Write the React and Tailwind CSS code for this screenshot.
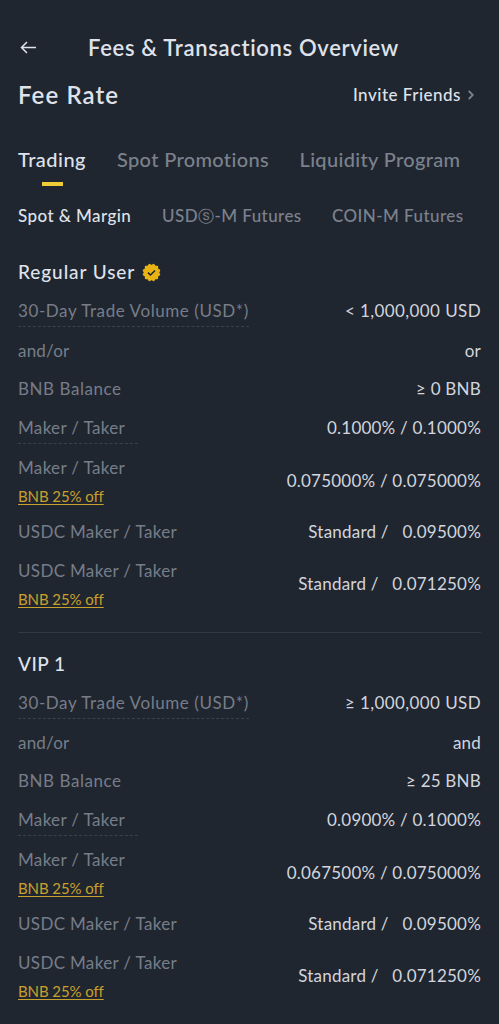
import clsx from "clsx";

const tabs = [
  { label: "Trading", className: "w-[68px] tracking-[0.5px]", active: true },
  { label: "Spot Promotions", className: "w-[152px] tracking-[0.35px]" },
  { label: "Liquidity Program", className: "w-[160px] tracking-[0.35px]" },
];

const vipLevels = [
  { name: "Regular User", verified: true, volume: "< 1,000,000 USD", joiner: "or", balance: "≥ 0 BNB", fee: "0.1000% / 0.1000%", discounted: "0.075000% / 0.075000%" },
  { name: "VIP 1", verified: false, volume: "≥ 1,000,000 USD", joiner: "and", balance: "≥ 25 BNB", fee: "0.0900% / 0.1000%", discounted: "0.067500% / 0.075000%" },
];

function BackIcon() {
  return (
    <svg className="h-4 w-4" fill="none" stroke="currentColor" strokeWidth="1.5" viewBox="0 0 16 16">
      <path d="M16 7.5H1.8M7 2L1.5 7.5L7 13" />
    </svg>
  );
}

function VerifiedBadge() {
  return (
    <svg className="h-[19px] w-[19px]" viewBox="0 0 20 20">
      <g fill="#e9b413">
        <rect height="14" rx="1" width="14" x="3" y="3" />
        <rect height="14" rx="1" transform="rotate(30 10 10)" width="14" x="3" y="3" />
        <rect height="14" rx="1" transform="rotate(60 10 10)" width="14" x="3" y="3" />
      </g>
      <path d="M6.3 10.1L8.9 12.6L13.7 7.9" fill="none" stroke="#202630" strokeWidth="1.7" />
    </svg>
  );
}

function Row({ label, value, className, labelClass = "tracking-[0.33px]", valueClass = "tracking-[0.22px]", discount }) {
  return (
    <div className={clsx("flex items-start justify-between", className)}>
      <div className="flex flex-col items-start text-[#777d88]">
        <span className={clsx("whitespace-nowrap", labelClass)}>{label}</span>
        {discount ? (
          <a className="mt-1 text-[15px] leading-6 tracking-[-0.1px] text-[#c8a02c] underline underline-offset-2">BNB 25% off</a>
        ) : null}
      </div>
      <span className={clsx("whitespace-pre text-[#d2d5dd]", valueClass, discount && "mt-[13px]")}>{value}</span>
    </div>
  );
}

function LevelSection({ level }) {
  return (
    <section className="h-[392px] border-b border-[#323943] pt-[19px] text-[17px] leading-6">
      <div className="mb-[15px] flex h-6 items-center gap-[7px]">
        <h2 className={clsx("text-[19px] font-medium text-[#dfe2ea]", level.verified ? "tracking-[0.92px]" : "tracking-[0.5px]")}>{level.name}</h2>
        {level.verified ? <VerifiedBadge /> : null}
      </div>
      <Row
        className="h-10"
        label="30-Day Trade Volume (USD*)"
        labelClass="h-7 w-[231px] border-b border-dashed border-[#3a414c] tracking-[0.58px]"
        value={level.volume}
        valueClass="tracking-[0.4px]"
      />
      <Row className="h-[38px]" label="and/or" labelClass="tracking-[0.2px]" value={level.joiner} />
      <Row className="h-[39px]" label="BNB Balance" labelClass="tracking-[0.55px]" value={level.balance} />
      <Row
        className="h-10"
        label="Maker / Taker"
        labelClass="h-7 w-[120px] border-b border-dashed border-[#3a414c] tracking-[0.33px]"
        value={level.fee}
      />
      <Row className="h-16" discount label="Maker / Taker" value={level.discounted} />
      <Row className="h-[39px]" label="USDC Maker / Taker" value={"Standard /   0.09500%"} />
      <Row className="h-[72px]" discount label="USDC Maker / Taker" value={"Standard /   0.071250%"} />
    </section>
  );
}

export default function App() {
  return (
    <main className="h-[1024px] w-[499px] overflow-hidden bg-[#202630] pl-[18px] pr-[18px] font-['Lato',sans-serif] text-[#dfe2ea]">
      <header className="flex h-[71px] items-center pt-6">
        <div className="w-[70px] pl-0.5">
          <BackIcon />
        </div>
        <h1 className="whitespace-nowrap text-[22px] font-semibold leading-8 tracking-[0.68px]">Fees &amp; Transactions Overview</h1>
      </header>

      <div className="flex h-12 items-center justify-between">
        <h2 className="text-[24px] font-semibold tracking-[1.1px]">Fee Rate</h2>
        <a className="mr-[7px] flex items-center gap-[7px] text-[17px] font-medium tracking-[0.5px]">
          Invite Friends
          <svg className="h-2.5 w-[6px]" fill="none" stroke="#7c828d" strokeWidth="1.8" viewBox="0 0 6 10">
            <path d="M0.8 1L4.8 5L0.8 9" />
          </svg>
        </a>
      </div>

      <nav className="mt-6 flex h-[43px] gap-[31px] text-[20px] font-medium leading-8">
        {tabs.map((tab) => (
          <div className={clsx("flex flex-col items-center whitespace-nowrap", tab.className, !tab.active && "text-[#7c828d]")} key={tab.label}>
            <span>{tab.label}</span>
            {tab.active ? <div className="mt-[7px] h-1 w-[21px] bg-[#efcb38]" /> : null}
          </div>
        ))}
      </nav>

      <nav className="mt-[18px] flex h-6 gap-[31px] whitespace-nowrap text-[17px] font-medium leading-6 tracking-[0.43px] text-[#7c828d]">
        <span className="w-[113px] text-[#dfe2ea]">Spot &amp; Margin</span>
        <span className="w-[139px]">
          USD<span className="font-['DejaVu_Sans'] text-[16px]">ⓢ</span>-M Futures
        </span>
        <span>COIN-M Futures</span>
      </nav>

      <div className="mt-[13px]">
        {vipLevels.map((level) => (
          <LevelSection key={level.name} level={level} />
        ))}
      </div>
    </main>
  );
}
